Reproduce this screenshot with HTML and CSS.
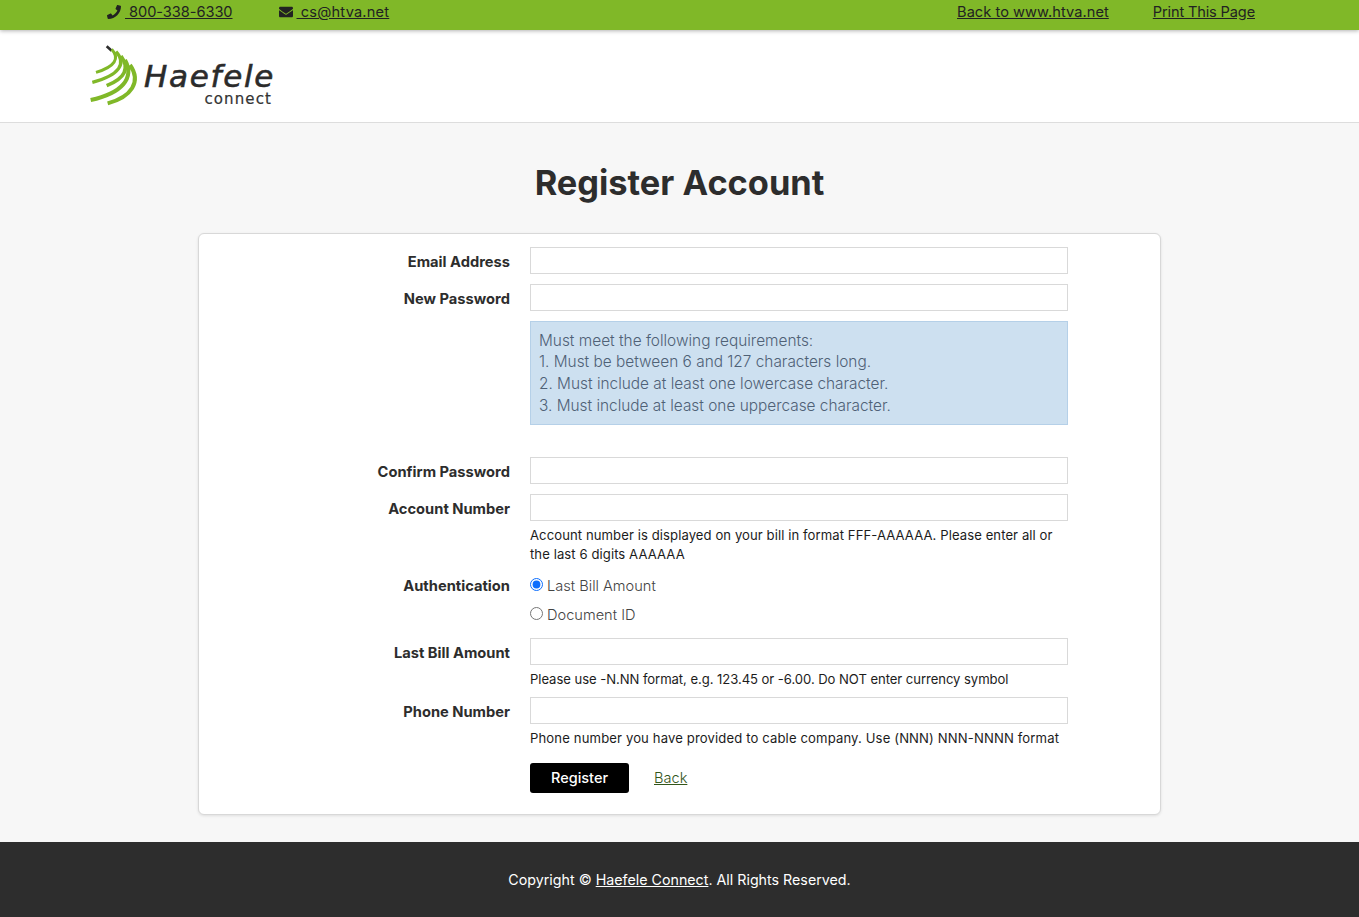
FILE: index.html
```html
<!DOCTYPE html>
<html lang="en">
<head>
<meta charset="utf-8">
<title>Register Account</title>
<link rel="stylesheet" href="styles.css">
</head>
<body>
<div class="topbar">
  <div class="top-left">
    <span class="top-item"><svg class="ico" viewBox="0 0 512 512" width="14" height="14"><path d="M493.4 24.6l-104-24c-11.3-2.6-22.9 3.3-27.5 13.9l-48 112c-4.2 9.8-1.4 21.3 6.9 28l60.6 49.6c-36 76.7-98.9 140.5-177.2 177.2l-49.6-60.6c-6.8-8.3-18.2-11.1-28-6.9l-112 48C3.900 366.500-2 378.100.6 389.400l24 104C27.100 504.200 36.700 512 48 512c256.100 0 464-207.500 464-464 0-11.200-7.700-20.900-18.600-23.400z"/></svg><a href="#" class="top-link tight">&nbsp;800-338-6330</a></span>
    <span class="top-item"><svg class="ico" viewBox="0 0 512 512" width="14" height="14"><path d="M502.300 190.800c3.900-3.100 9.700-.2 9.700 4.700V400c0 26.500-21.500 48-48 48H48c-26.500 0-48-21.500-48-48V195.600c0-5 5.700-7.800 9.700-4.700 22.400 17.400 52.100 39.500 154.100 113.600 21.100 15.400 56.700 47.800 92.200 47.600 35.700.3 72-32.800 92.300-47.600 102-74.100 131.600-96.300 154-113.700zM256 320c23.200.4 56.600-29.200 73.400-41.400 132.700-96.300 142.800-104.700 173.400-128.700 5.800-4.500 9.200-11.500 9.200-18.900v-19c0-26.500-21.500-48-48-48H48C21.500 64 0 85.500 0 112v19c0 7.400 3.400 14.300 9.200 18.900 30.600 23.900 40.700 32.400 173.400 128.700 16.800 12.200 50.200 41.800 73.400 41.400z"/></svg><a href="#" class="top-link wide">&nbsp;cs@htva.net</a></span>
  </div>
  <div class="top-right">
    <a href="#" class="top-link">Back to www.htva.net</a>
    <a href="#" class="top-link tighter">Print This Page</a>
  </div>
</div>
<header class="brand">
  <div class="logo">
    <svg class="logo-mark" viewBox="0 0 180 210" width="60" height="70" fill="none">
      <path d="M65 19 L80 32" stroke="#2d2d2d" stroke-width="8"/>
      <path d="M80 28 C105 55 90 80 33 97" stroke="#80b828" stroke-width="9"/>
      <path d="M93 35 C125 70 105 105 22 127" stroke="#80b828" stroke-width="10"/>
      <path d="M108 48 C135 85 120 115 65 137" stroke="#80b828" stroke-width="11"/>
      <path d="M120 60 C150 115 110 160 17 180" stroke="#80b828" stroke-width="12"/>
      <path d="M135 75 C170 125 140 170 68 190" stroke="#80b828" stroke-width="12"/>
    </svg>
    <div class="logo-text">
      <span class="logo-name">Haefele</span>
      <span class="logo-sub">connect</span>
    </div>
  </div>
</header>
<main class="content">
  <h1 class="title">Register Account</h1>
  <form class="card">
    <div class="row">
      <label class="lbl">Email Address</label>
      <div class="field"><input class="inp" type="text"></div>
    </div>
    <div class="row">
      <label class="lbl">New Password</label>
      <div class="field">
        <input class="inp" type="password">
        <div class="req">Must meet the following requirements:<br>1. Must be between 6 and 127 characters long.<br>2. Must include at least one lowercase character.<br>3. Must include at least one uppercase character.</div>
      </div>
    </div>
    <div class="row">
      <label class="lbl">Confirm Password</label>
      <div class="field"><input class="inp" type="password"></div>
    </div>
    <div class="row row-account">
      <label class="lbl">Account Number</label>
      <div class="field">
        <input class="inp" type="text">
        <p class="hint hint-account">Account number is displayed on your bill in format FFF-AAAAAA. Please enter all or<br>the last 6 digits AAAAAA</p>
      </div>
    </div>
    <div class="row row-auth">
      <label class="lbl">Authentication</label>
      <div class="field">
        <label class="radio"><input type="radio" name="auth" checked> Last Bill Amount</label>
        <label class="radio"><input type="radio" name="auth"> Document ID</label>
      </div>
    </div>
    <div class="row row-tight">
      <label class="lbl">Last Bill Amount</label>
      <div class="field">
        <input class="inp" type="text">
        <p class="hint hint-bill">Please use -N.NN format, e.g. 123.45 or -6.00. Do NOT enter currency symbol</p>
      </div>
    </div>
    <div class="row row-tight">
      <label class="lbl">Phone Number</label>
      <div class="field">
        <input class="inp" type="text">
        <p class="hint hint-phone">Phone number you have provided to cable company. Use (NNN) NNN-NNNN format</p>
      </div>
    </div>
    <div class="row row-actions">
      <span class="lbl"></span>
      <div class="field actions">
        <button class="btn" type="button">Register</button>
        <a href="#" class="back">Back</a>
      </div>
    </div>
  </form>
</main>
<footer class="foot">Copyright © <a href="#" class="foot-link">Haefele Connect</a>. All Rights Reserved.</footer>
</body>
</html>
```
FILE: styles.css
```css
* { box-sizing: border-box; }
html, body { margin: 0; padding: 0; }
body {
  background: #f7f7f7;
  font-family: "Inter", "Noto Sans", sans-serif;
  font-size: 14px;
  color: #2d2d2d;
  min-height: 917px;
  display: flex;
  flex-direction: column;
}
.topbar {
  height: 30px;
  background: #80b828;
  box-shadow: 0 1px 4px rgba(0,0,0,.3);
  display: flex;
  justify-content: space-between;
  align-items: center;
  padding: 0 104px 6px 107px;
  position: relative;
  font-size: 14.6px;
  letter-spacing: .05px;
}
.top-left, .top-right { display: flex; align-items: center; }
.top-left { gap: 46px; }
.top-right { gap: 44px; }
.top-item { display: flex; align-items: center; gap: 4px; }
.ico { fill: #222; flex: none; }
.top-link { color: #222; text-decoration: underline; }
.tight { letter-spacing: -.05px; }
.wide { letter-spacing: .2px; }
.tighter { letter-spacing: -.15px; }
.brand {
  height: 93px;
  background: #fff;
  border-bottom: 1px solid #ddd;
  padding: 10px 0 0 85px;
}
.logo { display: flex; align-items: flex-start; }
.logo-mark { flex: none; }
.logo-text { display: flex; flex-direction: column; align-items: flex-end; margin: 21px 0 0 0; width: 130px; }
.logo-name {
  font-family: "DejaVu Sans", sans-serif;
  font-style: italic;
  font-size: 31px;
  line-height: 30px;
  color: #2b2b2b;
  letter-spacing: 1.7px;
  white-space: nowrap;
  -webkit-text-stroke: .6px #2b2b2b;
}
.logo-sub { font-family: "DejaVu Sans", sans-serif; font-size: 15px; line-height: 14px; color: #333; letter-spacing: 1.1px; margin: 1px 3px 0 0; -webkit-text-stroke: .2px #333; }
.content { flex: 1; padding: 0 198px; }
.title {
  margin: 40px 0 30px;
  text-align: center;
  font-family: "Inter", sans-serif;
  font-size: 34.400px;
  line-height: 40px;
  font-weight: 700;
  color: #2d2d2d;
}
.card {
  width: 963px;
  height: 582px;
  background: #fff;
  border: 1px solid #d8d8d8;
  border-radius: 6px;
  box-shadow: 0 1px 3px rgba(0,0,0,.1);
  padding: 13px 92px 0 0;
  display: flex;
  flex-direction: column;
}
.row { display: flex; margin-bottom: 10px; }
.lbl {
  width: 311px;
  height: 27px;
  flex: none;
  text-align: right;
  font-weight: 700;
  font-size: 14.700px;
  line-height: 30px;
  color: #2d2d2d;
  margin-right: 20px;
}
.field { width: 538px; flex: none; }
.inp {
  display: block;
  width: 538px;
  height: 27px;
  border: 1px solid #d9d9d9;
  background: #fff;
  padding: 0 8px;
  margin: 0;
  outline: 0;
}
.req {
  margin: 10px 0 22px;
  height: 104px;
  padding: 7.500px 8px;
  background: #cde0f0;
  border: 1px solid #b5d0e8;
  color: #4f6176;
  font-size: 15.400px;
  font-weight: 300;
  line-height: 21.800px;
}
.row-tight { margin-bottom: 8.500px; }
.row-account { margin-bottom: 7.500px; }
.hint {
  margin: 4.500px 0 0;
  font-size: 13.100px;
  line-height: 19px;
  color: #1c1c1c;
  white-space: nowrap;
}
.hint-account { letter-spacing: .08px; }
.hint-bill { letter-spacing: -.06px; }
.hint-phone { letter-spacing: .13px; }
.row-auth { margin-bottom: 9px; }
.radio {
  display: flex;
  align-items: center;
  height: 29px;
  font-size: 14.600px;
  font-weight: 300;
  color: #444;
}
.radio input { margin: -3px 4px 0 0; width: 13px; height: 13px; accent-color: #0d6efd; }
.actions { display: flex; align-items: center; gap: 25px; padding-top: 7px; }
.btn {
  width: 99px;
  height: 30px;
  padding: 0 0 2px;
  background: #000;
  color: #fff;
  border: 0;
  border-radius: 3px;
  font-family: "Inter", sans-serif;
  font-size: 14.500px;
  font-weight: 500;
}
.back { color: #33561a; text-decoration: underline; font-weight: 300; font-size: 14.600px; }
.foot {
  height: 75px;
  padding-bottom: 1px;
  background: #2d2d2d;
  color: #fff;
  font-size: 14.250px;
  display: flex;
  align-items: center;
  justify-content: center;
  white-space: pre-wrap;
}
.foot-link { color: #fff; text-decoration: underline; }
```
